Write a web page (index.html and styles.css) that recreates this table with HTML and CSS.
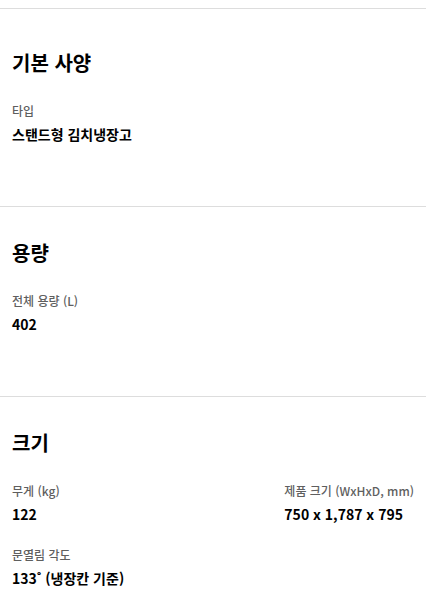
FILE: index.html
```html
<!DOCTYPE html>
<html lang="ko">
<head>
<meta charset="utf-8">
<link rel="stylesheet" href="styles.css">
</head>
<body>
<div class="top-gap"></div>
<section class="spec-section first">
  <h2 class="spec-title">기본 사양</h2>
  <div class="spec-grid">
    <div class="spec-item">
      <div class="spec-label">타입</div>
      <div class="spec-value">스탠드형 김치냉장고</div>
    </div>
  </div>
</section>
<section class="spec-section">
  <h2 class="spec-title">용량</h2>
  <div class="spec-grid">
    <div class="spec-item">
      <div class="spec-label">전체 용량 (L)</div>
      <div class="spec-value">402</div>
    </div>
  </div>
</section>
<section class="spec-section">
  <h2 class="spec-title">크기</h2>
  <div class="spec-grid two">
    <div class="spec-item">
      <div class="spec-label">무게 (kg)</div>
      <div class="spec-value">122</div>
    </div>
    <div class="spec-item">
      <div class="spec-label">제품 크기 (WxHxD, mm)</div>
      <div class="spec-value">750 x 1,787 x 795</div>
    </div>
    <div class="spec-item">
      <div class="spec-label">문열림 각도</div>
      <div class="spec-value">133˚ (냉장칸 기준)</div>
    </div>
  </div>
</section>
</body>
</html>
```
FILE: styles.css
```css
html, body {
  margin: 0;
  padding: 0;
  background: #fff;
}
body {
  font-family: "Noto Sans CJK KR", "Noto Sans", sans-serif;
  color: #000;
}
.top-gap {
  height: 8px;
}
.spec-section {
  border-top: 1px solid #dddddd;
  padding: 31px 12px 62px;
}
.spec-section.first {
  padding-top: 39px;
}
.spec-title {
  margin: 0;
  font-size: 20px;
  font-weight: 700;
  line-height: 30px;
}
.spec-grid {
  margin-top: 24px;
  display: grid;
  grid-template-columns: 1fr;
  row-gap: 22px;
}
.spec-grid.two {
  grid-template-columns: 1fr auto;
}
.spec-label {
  font-size: 12px;
  line-height: 18px;
  color: #5f5f5f;
  font-weight: 500;
}
.spec-value {
  margin-top: 4px;
  font-size: 14px;
  line-height: 20px;
  font-weight: 700;
}
```
